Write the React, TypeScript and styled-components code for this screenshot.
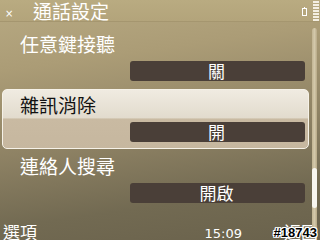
import React from "react";
import styled, { createGlobalStyle } from "styled-components";

const Global = createGlobalStyle`
  html, body { margin: 0; padding: 0; background: #000; }
  body { font-family: "Noto Sans CJK TC", "Liberation Sans", sans-serif; }
`;

const Screen = styled.div`
  position: relative;
  width: 320px;
  height: 240px;
  overflow: hidden;
  display: flex;
  flex-direction: column;
  background: linear-gradient(172deg, #b8aa83 0%, #ab9c76 25%, #8e8264 55%, #726a52 80%, #6a624c 100%);
  color: #fff;
  font-family: "Noto Sans CJK TC", "Liberation Sans", sans-serif;
`;

const TitleBar = styled.div`
  flex: 0 0 21px;
  display: flex;
  align-items: center;
  background: linear-gradient(180deg, #b9ab81, #b3a47b);
  border-bottom: 1px solid #a5966f;
  padding-left: 5px;
`;

const CloseX = styled.span`
  font-family: "DejaVu Sans", sans-serif;
  font-size: 10px;
  line-height: 10px;
  margin-top: 6px;
  width: 28px;
`;

const Title = styled.span`
  font-size: 19px;
  line-height: 21px;
  flex: 1;
`;

const Status = styled.div`
  display: flex;
  align-items: flex-start;
  align-self: flex-start;
  gap: 6px;
  padding-right: 1px;
`;

const Battery = styled.div`
  margin-top: 8px;
  width: 3px;
  height: 6px;
  border: 1px solid #fff;
  position: relative;
  &::before {
    content: "";
    position: absolute;
    top: -2px;
    left: 1px;
    width: 1px;
    height: 1px;
    background: #fff;
  }
`;

const Signal = styled.div`
  display: flex;
  flex-direction: column;
  gap: 1px;
  padding-top: 1px;
`;

const SigBar = styled.div`
  width: 6px;
  height: 2px;
  background: #f4efe2;
`;

const Body = styled.div`
  flex: 0 0 197px;
  height: 197px;
  min-height: 0;
  display: flex;
  align-items: flex-start;
  padding-top: 6px;
  box-sizing: border-box;
`;

const List = styled.div`
  display: flex;
  flex-direction: column;
  gap: 1px;
  width: 307px;
  margin-left: 2px;
`;

const Item = styled.div<{ $selected?: boolean }>`
  height: 60px;
  box-sizing: border-box;
  display: flex;
  flex-direction: column;
  border-radius: 5px;
  border: 1px solid ${(p) => (p.$selected ? "#f6f2e8" : "transparent")};
  background: ${(p) =>
    p.$selected
      ? "linear-gradient(180deg, #f0ebe1 0%, #e2dbcd 48%, #c9baa2 50%, #c6b79f 100%)"
      : "transparent"};
`;

const Label = styled.div<{ $selected?: boolean }>`
  height: 29px;
  line-height: 29px;
  padding-left: 17px;
  font-size: 19px;
  color: ${(p) => (p.$selected ? "#111" : "#fff")};
`;

const ValueBox = styled.div`
  margin: 3px 3px 0 127px;
  height: 20px;
  border-radius: 3px;
  background: #4a3f38;
  color: #fff;
  font-size: 17px;
  line-height: 20px;
  text-align: center;
  padding-right: 2px;
`;

const ScrollTrack = styled.div`
  flex: 0 0 auto;
  margin-left: 3px;
  width: 5px;
  height: 202px;
  border-radius: 3px;
  background: linear-gradient(90deg, #c2b593, #d3c8aa, #b8aa88);
  display: flex;
  flex-direction: column;
  padding-top: 140px;
  box-sizing: border-box;
  position: relative;
  z-index: 1;
`;

const ScrollThumb = styled.div`
  height: 40px;
  border-radius: 3px;
  background: #f8f6f0;
`;

const SoftKeys = styled.div`
  flex: 0 0 21px;
  display: flex;
  align-items: center;
  padding: 0 2px 0 3px;
`;

const SoftKey = styled.span`
  font-size: 17px;
  line-height: 21px;
`;

const Clock = styled.span`
  margin-left: auto;
  margin-right: 42px;
  font-family: "DejaVu Sans", sans-serif;
  font-size: 13px;
  line-height: 21px;
  margin-top: 4px;
`;

const Stamp = styled.span`
  position: absolute;
  right: 3px;
  bottom: 1px;
  z-index: 2;
  font-family: "Liberation Sans", sans-serif;
  font-weight: bold;
  font-size: 13px;
  line-height: 12px;
  color: #000;
  text-shadow: 1px 0 #fff, -1px 0 #fff, 0 1px #fff, 0 -1px #fff, 1px 1px #fff, -1px -1px #fff, 1px -1px #fff, -1px 1px #fff;
`;

const items = [
  { label: "任意鍵接聽", value: "關" },
  { label: "雜訊消除", value: "開", selected: true },
  { label: "連絡人搜尋", value: "開啟" },
];

export default function App() {
  return (
    <>
      <Global />
      <Screen>
        <TitleBar>
          <CloseX>×</CloseX>
          <Title>通話設定</Title>
          <Status>
            <Battery />
            <Signal>
              {Array.from({ length: 7 }).map((_, i) => (
                <SigBar key={i} />
              ))}
            </Signal>
          </Status>
        </TitleBar>
        <Body>
          <List>
            {items.map((it) => (
              <Item key={it.label} $selected={it.selected}>
                <Label $selected={it.selected}>{it.label}</Label>
                <ValueBox>{it.value}</ValueBox>
              </Item>
            ))}
          </List>
          <ScrollTrack>
            <ScrollThumb />
          </ScrollTrack>
        </Body>
        <SoftKeys>
          <SoftKey>選項</SoftKey>
          <Clock>15:09</Clock>
          <SoftKey>返回</SoftKey>
        </SoftKeys>
        <Stamp>#18743</Stamp>
      </Screen>
    </>
  );
}
